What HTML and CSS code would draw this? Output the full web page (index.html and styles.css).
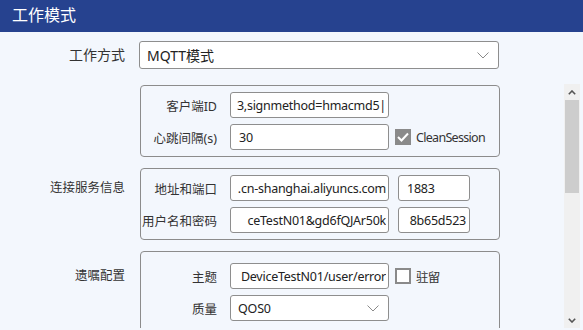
FILE: index.html
```html
<!DOCTYPE html>
<html lang="zh-CN">
<head>
    <meta charset="UTF-8">
    <meta name="viewport" content="width=device-width, initial-scale=1.0">
    <title>工作模式</title>
    <link rel="stylesheet" href="styles.css">
</head>
<body>
    <div class="title-bar">工作模式</div>

    <div class="form-row top-row">
        <div class="row-label">工作方式</div>
        <div class="select wide">
            <span class="select-text">MQTT模式</span>
            <svg class="chevron" width="12" height="7" viewBox="0 0 12 7"><polyline points="0.5,0.5 6,6 11.5,0.5" fill="none" stroke="#8a8a8a" stroke-width="1"/></svg>
        </div>
    </div>

    <div class="scroll-area">
        <div class="scroll-content">
            <!-- 客户端参数 -->
            <div class="form-row">
                <div class="row-label"></div>
                <div class="group">
                    <div class="field-row">
                        <span class="field-label">客户端ID</span>
                        <div class="field">
                            <div class="field-clip"><span>3,signmethod=hmacmd5|</span></div>
                        </div>
                    </div>
                    <div class="field-row">
                        <span class="field-label">心跳间隔(s)</span>
                        <div class="field start"><span>30</span></div>
                        <span class="checkbox checked">
                            <svg width="12" height="10" viewBox="0 0 12 10"><polyline points="1,5 4.5,8.5 11,1.5" fill="none" stroke="#fff" stroke-width="2"/></svg>
                        </span>
                        <span class="check-text">CleanSession</span>
                    </div>
                </div>
            </div>

            <!-- 连接服务信息 -->
            <div class="form-row">
                <div class="row-label">连接服务信息</div>
                <div class="group">
                    <div class="field-row">
                        <span class="field-label">地址和端口</span>
                        <div class="field">
                            <div class="field-clip"><span>.cn-shanghai.aliyuncs.com</span></div>
                        </div>
                        <div class="field start port"><span>1883</span></div>
                    </div>
                    <div class="field-row">
                        <span class="field-label">用户名和密码</span>
                        <div class="field">
                            <div class="field-clip"><span>ceTestN01&amp;gd6fQJAr50k</span></div>
                        </div>
                        <div class="field port">
                            <div class="field-clip"><span>8b65d523</span></div>
                        </div>
                    </div>
                </div>
            </div>

            <!-- 遗嘱配置 -->
            <div class="form-row will-row">
                <div class="row-label">遗嘱配置</div>
                <div class="group">
                    <div class="field-row">
                        <span class="field-label">主题</span>
                        <div class="field">
                            <div class="field-clip"><span>DeviceTestN01/user/error</span></div>
                        </div>
                        <span class="checkbox"></span>
                        <span class="check-text">驻留</span>
                    </div>
                    <div class="field-row">
                        <span class="field-label">质量</span>
                        <div class="select narrow">
                            <span class="select-text">QOS0</span>
                            <svg class="chevron" width="12" height="7" viewBox="0 0 12 7"><polyline points="0.5,0.5 6,6 11.5,0.5" fill="none" stroke="#8a8a8a" stroke-width="1"/></svg>
                        </div>
                    </div>
                </div>
            </div>
        </div>

        <div class="scrollbar">
            <div class="scroll-btn">
                <svg width="8" height="5" viewBox="0 0 8 5"><polyline points="0.8,4.2 4,1 7.2,4.2" fill="none" stroke="#555" stroke-width="1.6"/></svg>
            </div>
            <div class="scroll-thumb"></div>
            <div class="scroll-track"></div>
            <div class="scroll-btn">
                <svg width="8" height="5" viewBox="0 0 8 5"><polyline points="0.8,0.8 4,4 7.2,0.8" fill="none" stroke="#555" stroke-width="1.6"/></svg>
            </div>
        </div>
    </div>
</body>
</html>
```

FILE: styles.css
```css
body {
    margin: 0;
    font-family: "Noto Sans", "Noto Sans CJK SC", sans-serif;
    background-color: #f3f7fd;
    color: #333;
    height: 330px;
    overflow: hidden;
}

.title-bar {
    height: 32px;
    line-height: 30px;
    padding-left: 12px;
    background-color: #26428f;
    color: #fff;
    font-size: 16px;
}

.form-row {
    display: grid;
    grid-template-columns: 125px 360px;
    column-gap: 15px;
    align-items: start;
}

.row-label {
    text-align: right;
    font-size: 12.5px;
    line-height: 26px;
    padding-top: 7px;
    white-space: nowrap;
}

.top-row {
    margin-top: 9px;
    column-gap: 14px;
    align-items: center;
}

.top-row .row-label {
    font-size: 14px;
    padding-top: 0;
}

/* 下拉框 */
.select {
    box-sizing: border-box;
    display: flex;
    align-items: center;
    justify-content: space-between;
    background-color: #fff;
    border: 1px solid #8e8e8e;
    border-radius: 3px;
    padding: 0 9px 0 7px;
    color: #222;
}

.select.wide {
    height: 28px;
    font-size: 14px;
}

.select.narrow {
    width: 159px;
    height: 26px;
    font-size: 12.5px;
    letter-spacing: -0.2px;
}

.scroll-area {
    display: flex;
    height: 244px;
    margin-top: 15px;
    overflow: hidden;
}

.scroll-content {
    flex: 1;
    padding-top: 1px;
}

.scroll-content .form-row {
    margin-bottom: 11px;
}

.group {
    border: 1px solid #8c8c8c;
    border-radius: 4px;
    padding: 6px 0;
    display: flex;
    flex-direction: column;
    gap: 6px;
}

.will-row .row-label {
    padding-top: 12px;
}

.will-row .group {
    padding-top: 11px;
    min-height: 100px;
}

.field-row {
    display: flex;
    align-items: center;
    height: 26px;
}

.field-label {
    width: 76px;
    margin-right: 13px;
    text-align: right;
    font-size: 12.5px;
    white-space: nowrap;
}

/* 文本框 */
.field {
    box-sizing: border-box;
    width: 159px;
    height: 26px;
    display: flex;
    align-items: center;
    background-color: #fff;
    border: 1px solid #8e8e8e;
    border-radius: 3px;
    padding: 0 2px 0 6px;
    font-size: 12.5px;
    letter-spacing: -0.25px;
    color: #222;
    white-space: nowrap;
}

.field.start {
    padding-left: 8px;
}

.field-clip {
    flex: 1;
    display: flex;
    justify-content: flex-end;
    overflow: hidden;
}

.field.port {
    width: 72px;
    margin-left: 9px;
    padding-right: 3px;
}

.checkbox {
    box-sizing: border-box;
    width: 16px;
    height: 16px;
    margin-left: 6px;
    border: 2px solid #8a8a8a;
    background-color: #fff;
    display: flex;
    align-items: center;
    justify-content: center;
}

.checkbox.checked {
    background-color: #8a8a8a;
}

.check-text {
    margin-left: 5px;
    font-size: 12.5px;
    letter-spacing: -0.7px;
}

/* 滚动条 */
.scrollbar {
    width: 16px;
    margin-right: 3px;
    display: flex;
    flex-direction: column;
    background-color: #f0f0f0;
}

.scroll-btn {
    height: 16px;
    display: flex;
    align-items: center;
    justify-content: center;
}

.scroll-thumb {
    height: 93px;
    margin: 0 1px;
    background-color: #cdcdcd;
}

.scroll-track {
    flex: 1;
}
```
